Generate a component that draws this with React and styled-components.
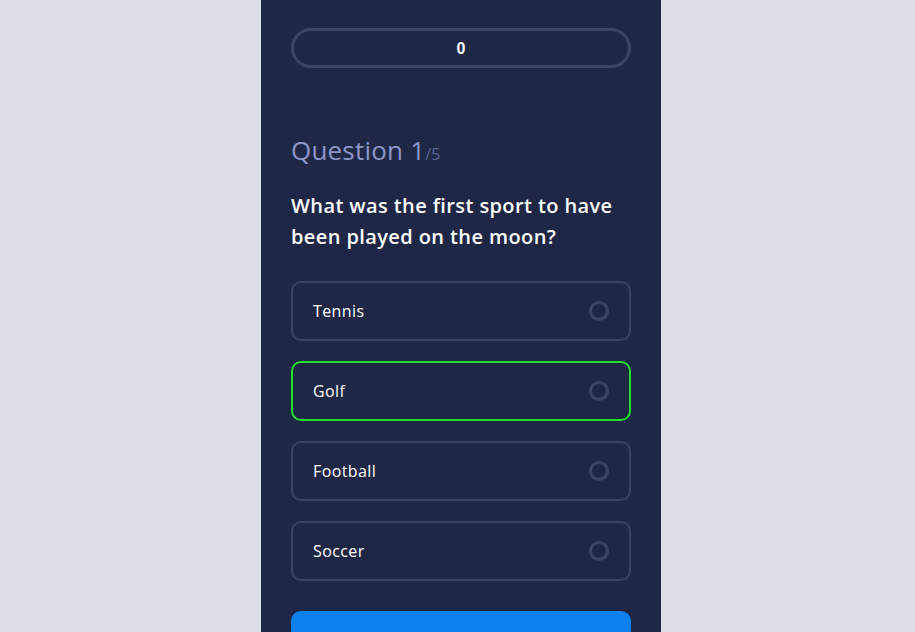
import React from "react";
import styled, { createGlobalStyle } from "styled-components";

const Global = createGlobalStyle`
  html, body { margin: 0; padding: 0; background: #dcdee8; height: 100%; overflow: hidden; }
  body { font-family: "Open Sans", "Liberation Sans", sans-serif; }
`;

const Page = styled.div`
  display: flex;
  justify-content: center;
  padding-left: 7px;
  min-height: 632px;
`;

const Card = styled.div`
  width: 400px;
  box-sizing: border-box;
  background: #1f2747;
  padding: 28px 30px 40px;
  display: flex;
  flex-direction: column;
  min-height: 720px;
`;

const Score = styled.div`
  height: 40px;
  box-sizing: border-box;
  border: 3px solid #3b4466;
  border-radius: 20px;
  display: flex;
  align-items: center;
  justify-content: center;
  padding-top: 2px;
  color: #ffffff;
  font-family: "Liberation Sans", Arial, sans-serif;
  font-weight: 700;
  font-size: 16px;
`;

const Heading = styled.h2`
  margin: 65px 0 0;
  font-size: 26px;
  font-weight: 500;
  color: #8d96c6;
  line-height: 34px;
  letter-spacing: 0.2px;
`;

const Total = styled.span`
  font-size: 16px;
  color: #5a6490;
`;

const Prompt = styled.p`
  margin: 19px 0 0;
  font-size: 20px;
  font-weight: 600;
  color: #ffffff;
  line-height: 31px;
  letter-spacing: 0.4px;
`;

const Options = styled.div`
  margin-top: 29px;
  display: flex;
  flex-direction: column;
  gap: 20px;
`;

const Option = styled.label`
  height: 60px;
  box-sizing: border-box;
  border: 2px solid ${(p) => (p.$selected ? "#1fe22e" : "#3b4466")};
  border-radius: 10px;
  padding: 0 20px;
  display: flex;
  align-items: center;
  justify-content: space-between;
  color: #ffffff;
  font-size: 16px;
  font-weight: 400;
  letter-spacing: 0.4px;
  cursor: pointer;
`;

const Radio = styled.span`
  width: 20px;
  height: 20px;
  box-sizing: border-box;
  border: 3px solid #3b4466;
  border-radius: 50%;
`;

const Button = styled.button`
  margin-top: 30px;
  height: 64px;
  border: none;
  border-radius: 10px;
  background: #0c80ef;
  color: #fff;
  font-family: inherit;
  font-size: 16px;
  font-weight: 600;
`;

const answers = ["Tennis", "Golf", "Football", "Soccer"];

export default function App() {
  return (
    <>
      <Global />
      <Page>
        <Card>
          <Score>0</Score>
          <Heading>
            Question 1<Total>/5</Total>
          </Heading>
          <Prompt>What was the first sport to have been played on the moon?</Prompt>
          <Options>
            {answers.map((a) => (
              <Option key={a} $selected={a === "Golf"}>
                {a}
                <Radio />
              </Option>
            ))}
          </Options>
          <Button>Next</Button>
        </Card>
      </Page>
    </>
  );
}
